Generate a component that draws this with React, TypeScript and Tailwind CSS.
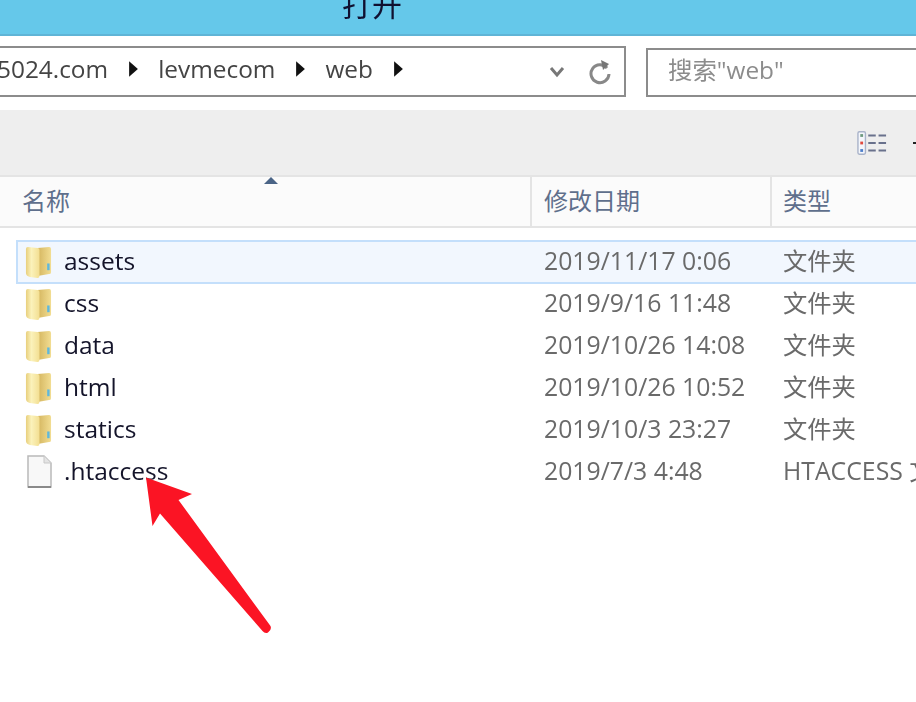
const font = { fontFamily: '"Open Sans", "Noto Sans CJK SC", sans-serif' };

const rows = [
  { name: "assets", date: "2019/11/17 0:06", type: "文件夹", selected: true },
  { name: "css", date: "2019/9/16 11:48", type: "文件夹" },
  { name: "data", date: "2019/10/26 14:08", type: "文件夹" },
  { name: "html", date: "2019/10/26 10:52", type: "文件夹" },
  { name: "statics", date: "2019/10/3 23:27", type: "文件夹" },
  { name: ".htaccess", date: "2019/7/3 4:48", type: "HTACCESS 文件", file: true },
];

function FolderIcon() {
  return (
    <svg width="27" height="33" viewBox="0 0 28 34" className="shrink-0">
      <defs>
        <linearGradient id="folderLeft" x1="0" y1="0" x2="1" y2="0">
          <stop offset="0" stopColor="#e8cf7c" />
          <stop offset="0.4" stopColor="#fbf2bb" />
          <stop offset="1" stopColor="#f3df92" />
        </linearGradient>
        <linearGradient id="folderRight" x1="0" y1="0" x2="1" y2="0">
          <stop offset="0" stopColor="#d4b55e" />
          <stop offset="1" stopColor="#f2dd92" />
        </linearGradient>
      </defs>
      <path d="M13 2 L25 1 Q27 1 27 3 L27 27 Q27 29 25 29 L13 31 Z" fill="url(#folderRight)" />
      <path d="M1 3 Q1 1 3 1 L13 2 Q15 2 15 4 L15 31 Q15 33 13 33 L5 32 Q1 31 1 28 Z" fill="url(#folderLeft)" />
      <rect x="23" y="18" width="2.5" height="7" fill="#5fb8dc" />
    </svg>
  );
}

function FileIcon() {
  return (
    <svg width="28" height="34" viewBox="0 0 28 34" className="shrink-0">
      <path d="M3 1 H19 L26 8 V32 H3 Z" fill="#f8f8f8" stroke="#b9b9b9" strokeWidth="1.5" />
      <path d="M3 32 H26" stroke="#8a8a8a" strokeWidth="2" />
      <path d="M19 1 V8 H26" fill="#e4e4e4" stroke="#c8c8c8" strokeWidth="1" />
    </svg>
  );
}

function ViewIcon() {
  return (
    <svg width="30" height="26" viewBox="0 0 32 26">
      <rect x="1" y="1" width="8" height="24" rx="1.5" fill="#f4f6fb" stroke="#a9b3c9" strokeWidth="1.5" />
      <rect x="3.5" y="3.5" width="3" height="3" fill="#6f9a80" />
      <rect x="3.5" y="11.5" width="3" height="3" fill="#e04a3f" />
      <rect x="3.5" y="19.5" width="3" height="3" fill="#4f7fcb" />
      <path d="M12 5 H20 M23 5 H31 M12 13 H20 M23 13 H31 M12 21 H20 M23 21 H31" stroke="#69718c" strokeWidth="2" />
    </svg>
  );
}

function Crumb({ text }: { text: string }) {
  return (
    <>
      <span>{text}</span>
      <svg width="11" height="16" viewBox="0 0 10 14" className="ml-[20px] mr-[19px]">
        <path d="M1 0 L9 7 L1 14 Z" fill="#111" />
      </svg>
    </>
  );
}

export default function App() {
  return (
    <div className="relative w-[916px] h-[702px] overflow-hidden bg-white" style={font}>
      <div className="blur-[0.4px]">
        {/* title bar */}
        <div className="h-[36px] pl-[342px] bg-[#65c8ea] border-b-2 border-[#5fb4d6] overflow-hidden">
          <div className="-mt-[15px] whitespace-nowrap text-[30px] leading-[40px] text-[#101030]">打开</div>
        </div>

        {/* address + search */}
        <div className="h-[74px] pt-[10px] flex">
          <div className="w-[630px] shrink-0 h-[51px] -ml-[4px] border-2 border-[#8c8c8c] flex items-center text-[24.4px] text-[#444]">
            <div className="flex-1 flex items-center -mt-[4px] -ml-[1px]">
              <Crumb text="5024.com" />
              <Crumb text="levmecom" />
              <Crumb text="web" />
            </div>
            <svg width="16" height="12" viewBox="0 0 16 12" className="mr-[23px]">
              <path d="M2 2 L8 9 L14 2" fill="none" stroke="#777" strokeWidth="3" />
            </svg>
            <svg width="24" height="26" viewBox="0 0 24 26" className="mr-[12px]">
              <path d="M19 9 A9 9 0 1 0 21 15" fill="none" stroke="#888" strokeWidth="3" />
              <path d="M13 1 L21 5 L15 11 Z" fill="#777" />
            </svg>
          </div>
          <div className="ml-[20px] mt-[2px] flex-1 h-[49px] border-y-2 border-l-2 border-[#8c8c8c] pl-[20px] pb-[4px] flex items-center text-[24.4px] text-[#8c8c8c] -mr-[4px]">
            搜索"web"
          </div>
        </div>

        {/* toolbar */}
        <div className="h-[65px] bg-[#eeeeee] flex items-center justify-end">
          <ViewIcon />
          <span className="ml-[26px] mr-[-3px] w-[6px] h-[2px] bg-[#222]" />
        </div>

        {/* column headers */}
        <div className="relative h-[53px] bg-[#fbfbfb] border-y-2 border-[#e4e4e4] flex text-[24px] text-[#5f6f8c]">
          <div className="w-[530px] pl-[22px] pb-[2px] flex items-center">名称</div>
          <div className="w-[240px] pl-[12px] pb-[2px] border-l-2 border-[#e4e4e4] flex items-center">修改日期</div>
          <div className="flex-1 pl-[11px] pb-[2px] border-l-2 border-[#e4e4e4] flex items-center">类型</div>
          <svg width="14" height="8" viewBox="0 0 14 8" className="absolute left-[264px] top-0">
            <path d="M7 0 L14 7 H0 Z" fill="#4a6486" />
          </svg>
        </div>

        {/* file rows */}
        <div className="pt-[12px] pl-[16px]">
          {rows.map((row) => (
            <div
              key={row.name}
              className={`flex items-center whitespace-nowrap border-y-2 border-l-2 ${
                row.selected ? "h-[44px] -mb-[1px] bg-[#f2f7fe] border-[#c4dffb]" : "h-[42px] border-transparent"
              }`}
            >
              <div className="w-[46px] shrink-0 pl-[7px] flex items-center">{row.file ? <FileIcon /> : <FolderIcon />}</div>
              <div className="w-[480px] shrink-0 pb-[2px] text-[24.5px] text-[#14142a]">{row.name}</div>
              <div className="w-[239px] shrink-0 pb-[2px] text-[24.8px] text-[#6a6a6a]">{row.date}</div>
              <div className={`shrink-0 pb-[2px] text-[#6a6a6a] ${row.file ? "text-[24.8px]" : "text-[24.3px]"}`}>{row.type}</div>
            </div>
          ))}
        </div>
      </div>

      {/* red annotation arrow */}
      <svg width="916" height="702" viewBox="0 0 916 702" className="absolute inset-0 pointer-events-none">
        <path
          d="M146 477.5 L192 494 L178.5 500 L270.5 626 Q272 630 268 632.5 Q265 634 262.5 631 L160 513.5 L152.5 526 Z"
          fill="#fb1424"
        />
      </svg>
    </div>
  );
}
